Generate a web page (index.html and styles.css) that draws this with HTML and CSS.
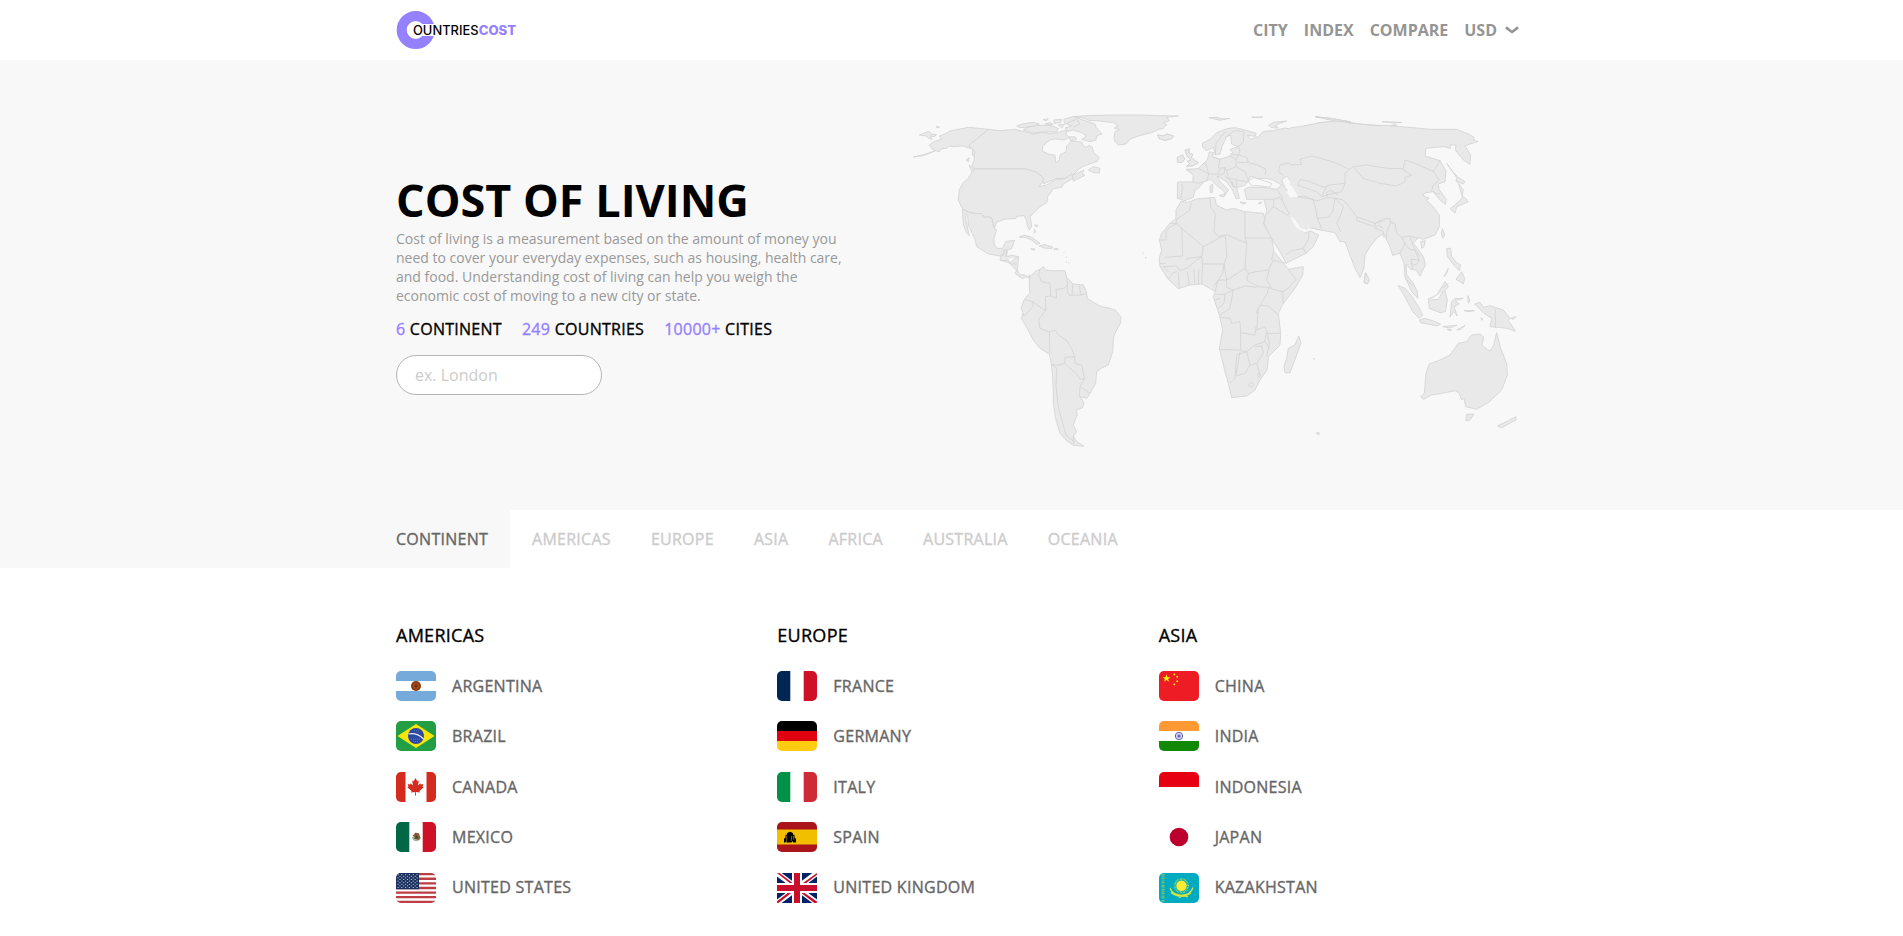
FILE: index.html
```html
<!DOCTYPE html>
<html lang="en">
<head>
<meta charset="utf-8">
<title>Countries Cost</title>
<link rel="stylesheet" href="styles.css">
</head>
<body>
<header class="header">
  <div class="container header-inner">
    <a class="logo" aria-label="Countries Cost">
      <svg width="122" height="40" viewBox="0 0 122 40">
        <circle cx="19.700" cy="20" r="14" fill="none" stroke="#9580ff" stroke-width="10"/>
        <path d="M25 14h17v12H25z" fill="#fff"/>
        <text class="logo-a" x="17" y="24.700" textLength="65.500" lengthAdjust="spacingAndGlyphs">OUNTRIES</text>
        <text class="logo-b" x="82.700" y="24.700" textLength="37.500" lengthAdjust="spacingAndGlyphs">COST</text>
      </svg>
    </a>
    <nav class="nav">
      <a>CITY</a><a>INDEX</a><a>COMPARE</a>
      <a class="currency">USD <svg width="14" height="8" viewBox="0 0 14 8"><path d="M1 1.200Q3.800 3.800 7 6Q10.200 3.800 13 1.200" fill="none" stroke="#959595" stroke-width="2.600"/></svg></a>
    </nav>
  </div>
</header>
<section class="hero">
  <div class="container hero-inner">
    <div class="intro">
      <h1>COST OF LIVING</h1>
      <p class="lead">Cost of living is a measurement based on the amount of money you<br>need to cover your everyday expenses, such as housing, health care,<br>and food. Understanding cost of living can help you weigh the<br>economic cost of moving to a new city or state.</p>
      <div class="stats"><span><b>6</b> CONTINENT</span><span><b>249</b> COUNTRIES</span><span><b>10000+</b> CITIES</span></div>
      <input class="search" type="text" placeholder="ex. London">
    </div>
    <svg class="map" width="604" height="340" viewBox="913 112 604 340">
      <!-- North America -->
      <g transform="translate(900 100) scale(.33333)">
        <path d="M58 105L75 98 88 94 95 102 110 104 102 110 92 108 96 118 85 114 78 108ZM88 135L105 123 125 118 118 108 135 102 150 93 205 82 265 88 208 138 228 150 224 172 217 165 218 148 190 138 160 140 148 138 140 145 125 146 118 155 100 150ZM40 171L70 164 105 153 70 167ZM108 81L118 80 118 83ZM198 180L208 173 205 186ZM207 195L225 210 218 219Z"/>
        <path d="M265 88L300 92 345 88 375 96 400 102 430 96 450 102 472 98 500 90 498 105 510 112 492 120 465 117 450 120 428 138 428 153 445 162 465 166 467 188 478 180 480 165 498 155 500 138 515 123 545 126 550 138 558 142 568 136 576 141 582 158 597 172 594 182 575 190 552 198 535 208 520 225 552 210 546 222 555 226 520 243 515 224 495 236 470 235 430 252 428 232 410 217 375 207 225 207 215 198 222 182 224 155 207 136Z"/>
        <path d="M225 207H375L390 210 410 217 428 232 430 240 418 260 440 255 470 238 495 236 515 222 520 235 490 252 485 262 460 266 443 290 441 308 420 320 402 338 390 350 395 378 388 390 382 378 380 362 372 347 350 349 347 356 318 357 290 366 283 385 275 353 260 350 253 352 245 341 225 340 205 336 187 326 175 300 178 270 190 248 205 235 215 218Z"/>
        <path d="M187 328L205 336 225 341 245 341 253 352 262 350 275 355 283 385 290 390 282 415 283 432 290 445 308 445 318 424 344 421 335 445 320 452 312 450 312 462 300 468 265 462 230 440 225 418 205 375 203 345 198 340 197 358 203 385 208 407 200 400 190 372Z"/>
        <path d="M312 450H322L320 470 335 466 356 470 352 510 360 525 372 524 382 530 388 525 390 535 378 530 368 536 345 520 350 512 340 500 325 487 300 480 303 468 312 464ZM320 452L317 470M303 482L325 480 330 490 345 475 356 470M332 492H350"/>
        <path d="M357 412L372 405 395 412 420 430 410 433 395 420 375 412ZM418 438L432 433 458 441 455 446 430 444ZM392 446L405 447 402 451ZM462 446H474V449H462ZM403 375L414 376 410 382ZM403 388L407 396 403 400ZM565 210L580 200 600 205 598 219 582 218ZM492 456V459M500 470V474M499 485V488M506 487V490M728 459H730M735 474H738"/>
        <path d="M520 50L560 47 640 45 720 45 775 47 835 48 800 52 808 62 790 68 800 74 790 85 775 88 755 98 715 108 690 118 678 132 655 135 645 125 642 112 645 95 658 88 642 84 655 78 640 68 590 62 570 62 550 54ZM773 105L790 108 800 102 820 108 815 116 795 121 778 116Z"/>
        <path d="M350 78L370 71 400 67 418 72 395 80 360 83ZM370 90L385 80 420 76 450 76 475 85 470 96 430 96 400 99ZM430 59L445 56 440 62ZM435 72L450 68 460 74ZM462 60L485 58 482 68 462 70ZM475 75L495 72 485 84ZM490 58L520 50 555 62 585 72 588 82 606 102 590 108 588 120 570 125 545 118 560 108 545 98 520 90 502 94 495 84 515 78 495 70ZM508 111L525 110 530 118 512 123ZM500 70L530 58 540 72 520 82"/>
        <path d="M855 150L868 148 866 158 878 163 874 172 885 182 896 188 880 197 860 199 870 190 862 184 873 180 861 168ZM833 172L848 165 854 178 845 188 832 186ZM858 208L878 207"/>
      </g>
      <!-- South America -->
      <g transform="translate(980 220) scale(.33333)">
        <path d="M148 180L152 168 165 155 180 148 190 140 196 150 215 152 255 152 260 172 272 184 278 192 310 195 318 212 322 235 345 250 365 260 388 264 408 272 423 292 421 310 405 340 400 355 398 395 385 435 365 444 350 456 347 490 330 520 320 535 300 530 312 548 308 563 288 570 292 584 285 600 280 615 290 635 280 648 290 665 312 679 280 676 258 660 240 640 228 600 220 550 220 520 218 470 214 430 208 402 180 385 160 360 140 322 124 295 130 280 123 265 132 240 150 218 148 200Z"/>
        <path fill="none" d="M180 148L176 165 185 185 210 190 212 228 196 230 198 270M212 228L230 234 228 208 250 206 262 196 260 172M262 196V215L268 226 300 225 318 222M278 194L276 226M298 196L302 226M132 238L158 245 160 258 135 286 124 282M158 245L190 268 198 270 176 298 180 325 208 336 225 330 236 346 260 362 275 385 284 410 255 412 254 430 232 436 216 433M208 336L210 400M284 410L285 430 305 436 314 475 300 478 292 464 254 430M314 475L300 500 330 520M300 500L298 530M216 433L230 445 228 500 235 560 248 610 258 645 285 668M280 645V672"/>
      </g>
      <!-- Europe and Africa -->
      <g transform="translate(1130 100) scale(.33333)">
        <path d="M217 130L240 118 260 98 290 86 315 83 345 90 378 100 376 109 352 106 362 118 385 110 400 94 430 92 465 84 495 90 520 80 570 68 620 63 665 68 700 73 750 76V388L735 360 690 420 660 460 645 425 630 400 615 388 575 390 540 383 525 392 500 365 483 350 495 372 525 400 540 392 566 405 550 440 528 460 468 490 450 455 418 405 402 370 410 330 402 298 350 298 343 268 355 262 400 262 440 268 455 255 428 240 408 235 380 236 362 228 352 248 340 258 320 262 328 295 318 296 308 270 290 246 262 228 270 245 296 270 286 282 280 272 262 258 242 238 222 245 205 265 195 270 190 292 165 302 142 295 143 246 188 246 190 225 170 210 205 205 232 180 238 155 250 158 248 170 270 178 300 168 308 158 300 148 325 140 305 132 302 105 290 110 276 140 270 162 256 165 250 142 230 152 218 142Z"/>
        <path d="M355 245L370 232 395 240 425 250 420 262 395 258 365 257ZM455 240L470 228 480 240 490 262 502 288 485 290 465 262Z" fill="#f8f8f8"/>
        <path d="M166 151L178 146 176 158 188 163 184 172 195 182 205 188 190 197 170 199 180 190 172 184 183 180 171 168ZM142 172L158 165 164 178 155 188 142 186ZM83 105L100 108 110 102 130 108 125 116 105 121 88 116ZM267 287L288 281 282 291ZM240 258L248 252 247 278 241 278ZM330 306L348 309 338 312ZM384 310L395 306 392 312ZM237 53L262 52 275 57 300 55 270 61ZM365 51H398L380 53ZM416 76L430 67 470 63 450 70 436 78 445 84 425 83ZM555 50L600 54 660 65 610 60Z"/>
        <path fill="none" d="M155 252L158 262 152 295M188 246L205 250 222 245M205 205L225 215 236 222 232 240M225 188L232 206 236 222 265 222 270 208M250 172L270 178 265 205 285 203 290 212 318 200 318 178 300 168M318 178L325 165 302 162M325 165L350 172 355 187 320 187M355 187L385 196 408 208 405 225M318 200L345 215 355 240M285 203L282 222 265 225M290 212L295 235 320 240 320 262 308 258 308 245M320 240L350 245M285 228L300 240 310 260M290 110L305 95 320 92 342 95 340 125 325 140 330 152 325 165M256 165L258 130 275 108 290 92M445 215L450 195 470 190 510 192 515 175 540 172 560 168 590 180 625 185 655 205 690 195 750 198M445 215L460 226M655 205L660 225 640 250 605 255 575 250 540 245 510 235 498 240 520 260 560 275 575 290 600 282 640 285 625 270 640 250M498 240L495 260M502 290L550 292 560 300 590 292 615 295 640 315 635 350 620 370 632 395M555 302L560 352 575 385M560 352L600 350 610 320 615 295M640 315L665 325 680 350 735 370 748 360M440 268L455 290 460 310 483 350M402 298H432L450 292 455 300M432 298L430 320 410 345M430 320L480 350M468 465L485 452 520 445 535 418 538 390M520 445L528 460M660 205L690 235 750 255M600 255L595 275"/>
        <path d="M154 303L172 308 200 297 254 292 259 315 290 330 310 325 345 335 400 340 405 355 400 370 425 415 432 455 465 495 475 508 520 500 518 525 495 565 460 610 445 640 452 700 450 735 415 770 412 808 390 840 375 870 350 888 305 893 295 850 285 815 268 745 278 690 268 645 250 590 256 575 240 565 215 552 180 555 145 566 115 538 90 500 88 475 95 450 88 420 95 400 118 372 138 355 138 330Z"/>
        <path fill="none" d="M184 310L180 330 140 358 138 370 220 440 215 470 200 480 170 505 150 512 140 498 100 500M118 370H142M88 420H108V395L118 382 142 370M155 385L158 468 105 472M220 440L285 405 288 425 290 470 282 492H218L215 470M240 294L242 320 256 342 252 395 265 410 285 405M345 335V410L350 430 288 403M350 414H425M350 430L345 505 330 515 290 540 282 492M345 505L355 520 380 515 415 510 430 480 465 490M355 520L350 540 385 560 415 562 412 580 385 625 380 690 402 680 410 690M290 540L290 562 310 570 345 558 380 562M290 540L265 540 255 575M256 583H285L310 570 300 625 270 645M285 583L282 610 265 625M252 600L270 595M270 652L300 655 305 670 330 665 332 698 375 705 378 680M332 698V750L268 748M332 752L350 755 375 735 405 725 408 700 452 700M350 755L320 765 315 835 300 850M330 755L318 828 345 820 360 795 380 790 400 760 395 738 375 740M350 755L360 795M380 790L390 825M356 855L365 845 372 854 362 862ZM385 820L392 825 388 834 383 828ZM390 615L415 618 445 645M415 562L430 568 458 575 460 610M458 575L475 565 498 538 475 508M418 510L410 540 425 565M385 625L378 640M145 518L148 565M172 515L178 555M192 508L194 550M206 508V552M218 490L215 552M165 480L175 475 215 470M115 538L128 520 140 515M88 490H108M100 500L115 515M250 560L265 540 278 520 282 492M410 690L418 730 410 770M405 725L418 745M425 480L430 455"/>
        <path d="M506 708L513 728 500 765 480 818 465 818 462 800 470 775 475 745 495 735ZM705 520L718 540 712 552 702 548ZM236 600H239M40 459H42M46 472H50M470 706H472M551 777H555"/>
      </g>
      <!-- Asia and Oceania -->
      <g transform="translate(1290 100) scale(.33333)">
        <path d="M0 84L40 78 90 68 140 63 185 70 220 73 255 77 290 76 330 80 370 83 420 88 500 88 535 102 552 112 550 120 564 125 540 132 525 138 542 165 540 193 520 180 496 150 498 135 480 135 482 145 460 140 408 145 405 168 450 182 468 212 465 245 445 252 447 268 468 298 466 313 450 300 430 275 408 278 398 286 418 295 408 300 428 318 448 345 448 380 435 405 400 418 385 412 370 430 382 445 400 470 406 495 390 528 378 510 362 508 348 492 350 525 370 550 382 575 384 595 365 575 345 530 342 490 330 460 308 466 298 435 280 400 260 415 240 440 225 465 222 505 210 533 195 505 178 460 165 425 150 425 135 398 92 390 60 383 45 392 20 375 0 350"/>
        <path fill="none" d="M0 194H35L30 178 65 168 110 180 145 192 178 208 190 200 232 195 290 205 340 206 345 180 380 192 430 215 448 240 430 255 425 272M178 208L165 220 165 250 120 255 100 262 60 245 32 238 22 255 80 275 95 290 120 282 155 275 165 250M190 202L220 235 270 250 320 258 345 245 345 232 365 225 338 208M430 215L450 182M425 272L440 282 450 280M20 290L70 298 78 330 82 355 95 385M22 290L40 288 80 303 112 292 135 295 128 335 115 352 82 355M135 295L160 320 150 350 140 370 152 395M135 295L160 300 185 330 200 350 255 370 280 362M200 350L202 362 255 380 255 370M255 370L280 358 300 355 302 368 315 370 320 400 335 412 345 430 330 460M255 385L280 395 280 412M255 385L265 375 280 385M302 368L290 395 288 415M335 412L360 408 385 415M345 430L355 445 375 452 388 480 378 495 362 490M360 410L370 440 390 470M388 480L362 478 368 508M345 535L370 558M112 292L110 278 120 270 145 285M95 290L110 260"/>
        <path d="M-10 276L3 254 18 278 24 290 0 292Z" fill="#f8f8f8" stroke="none"/>
        <path d="M-3 344L15 360 30 382 50 390 58 380 60 392 42 396 18 382Z" fill="#f8f8f8" stroke="none"/>
        <path d="M470 190L480 205 502 230 525 245 520 252 498 244 500 232ZM505 250L520 270 516 288 530 298 534 306 512 315 500 320 495 340 480 326 492 318 518 292ZM457 386L464 405 458 415 454 400ZM392 425L406 422 402 440 395 445ZM228 518L238 540 232 552 223 545ZM470 445H482L485 470 500 488 512 495 508 512 500 505 488 490 472 470ZM498 538L515 515 524 535 520 552 510 545ZM475 505L470 520 462 530Z"/>
        <path d="M325 557L345 565 368 592 385 620 398 645 388 655 368 635 350 600ZM388 660L405 655 430 663 452 672 440 678 392 668ZM458 680L500 676 478 684ZM472 688L485 690 480 692ZM500 690L526 676 512 688ZM415 597L440 585 465 545 475 560 465 572 472 600 466 635 450 638 418 625ZM422 600L445 598 460 572M480 652L485 605 495 595 520 595 495 602 508 612 492 620 502 648 490 635ZM533 587L540 600 535 610ZM523 632L553 632 535 635ZM554 612L570 607 580 622 600 617 640 630 660 655 655 662 668 680 676 694 650 685 625 682 600 680 605 655 582 640ZM616 628V684M662 655L678 650 670 658ZM572 655L578 655 576 661ZM460 562L475 550"/>
        <path d="M392 890L403 880 408 820 418 792 450 780 480 765 505 730 530 725 545 705 570 702 582 712 575 735 600 754 610 738 620 698 632 745 650 790 652 825 635 870 595 908 560 928 527 920 522 895 515 900 508 880 495 872 455 880 425 885 400 898ZM530 943L552 942 540 960 527 962ZM622 978L655 962 678 950 678 960 635 983ZM78 999L88 998 86 1005ZM70 776H74M76 50L130 57 184 66 130 62ZM276 65L335 67 310 69ZM304 76L320 75ZM80 645H81"/>
      </g>
    </svg>
  </div>
</section>
<div class="tabbar">
  <div class="container tabs">
    <a class="tab active">CONTINENT</a><a class="tab">AMERICAS</a><a class="tab">EUROPE</a><a class="tab">ASIA</a><a class="tab">AFRICA</a><a class="tab">AUSTRALIA</a><a class="tab">OCEANIA</a>
  </div>
</div>
<main class="container regions">
  <section class="region">
    <h2>AMERICAS</h2>
    <a class="country"><svg class="flag" viewBox="0 0 40 30"><path fill="#fff" d="M0 0h40v30H0z"/><path fill="#75aadb" d="M0 0h40v10H0zM0 20h40v10H0z"/><circle cx="20" cy="15" r="5" fill="#8a3a10"/><circle cx="20" cy="15" r="2.800" fill="#b0581a"/><circle cx="20" cy="15" r="1.700" fill="#6e2a10"/></svg>ARGENTINA</a>
    <a class="country"><svg class="flag" viewBox="0 0 40 30"><path fill="#229e45" d="M0 0h40v30H0z"/><path fill="#f8e509" d="M20 3L38.500 15 20 27 1.500 15z"/><circle cx="20" cy="15" r="8" fill="#2b49a3"/><path d="M12.500 13Q21 11.500 27.500 18" fill="none" stroke="#e8eef5" stroke-width="1.200"/><path d="M15 18h10M17 20.500h5M18 10h5" stroke="#7d90c8" stroke-width=".6" stroke-dasharray="1 1"/></svg>BRAZIL</a>
    <a class="country"><svg class="flag" viewBox="0 0 40 30"><path fill="#fff" d="M0 0h40v30H0z"/><path fill="#d52b1e" d="M0 0h9.500v30H0zM30.500 0H40v30h-9.500zM19.500 6l1.800 3.200 1.500-.7-.8 5 2.300-2.300.5 1.300 2.600-.5-.9 2.600 1.200.7-4.200 3.600.4 1.500-4-.5.1 3.600h-1l.1-3.600-4 .5.400-1.500-4.200-3.600 1.200-.7-.9-2.600 2.600.5.500-1.300 2.300 2.300-.8-5 1.500.7z"/></svg>CANADA</a>
    <a class="country"><svg class="flag" viewBox="0 0 40 30"><path fill="#fff" d="M0 0h40v30H0z"/><path fill="#006847" d="M0 0h13.300v30H0z"/><path fill="#ce1126" d="M26.700 0H40v30H26.700z"/><path d="M16 15a4.300 4.300 0 1 0 8.600 0z" fill="#a5b49c"/><path d="M16.500 14l3-3.500 3.500 1 1.500 4.500-2 2-3-1-1-2z" fill="#8a5838"/><path d="M18 17l3-4 1 3z" fill="#3c4c2f"/></svg>MEXICO</a>
    <a class="country"><svg class="flag" viewBox="0 0 40 30"><path fill="#fff" d="M0 0h40v30H0z"/><path stroke="#bd3d44" stroke-width="2.310" d="M0 1.150h40M0 5.770h40M0 10.400h40M0 15h40M0 19.600h40M0 24.200h40M0 28.850h40"/><path fill="#192f5d" d="M0 0h23v16.150H0z"/><path stroke="#c8cfdd" stroke-width="1" stroke-dasharray="1.100 2.700" d="M1.500 1.700h21M1.500 4.900h21M1.500 8.100h21M1.500 11.300h21M1.500 14.500h21M3.400 3.300h18M3.400 6.500h18M3.400 9.700h18M3.400 12.900h18"/></svg>UNITED STATES</a>
  </section>
  <section class="region">
    <h2>EUROPE</h2>
    <a class="country"><svg class="flag" viewBox="0 0 40 30"><path fill="#fff" d="M0 0h40v30H0z"/><path fill="#002654" d="M0 0h13.300v30H0z"/><path fill="#ce1126" d="M26.700 0H40v30H26.700z"/></svg>FRANCE</a>
    <a class="country"><svg class="flag" viewBox="0 0 40 30"><path d="M0 0h40v10H0z"/><path fill="#e1000f" d="M0 10h40v10H0z"/><path fill="#fc1" d="M0 20h40v10H0z"/></svg>GERMANY</a>
    <a class="country"><svg class="flag" viewBox="0 0 40 30"><path fill="#fff" d="M0 0h40v30H0z"/><path fill="#009246" d="M0 0h13.300v30H0z"/><path fill="#ce2b37" d="M26.700 0H40v30H26.700z"/></svg>ITALY</a>
    <a class="country"><svg class="flag" viewBox="0 0 40 30"><path fill="#aa151b" d="M0 0h40v30H0z"/><path fill="#f1bf00" d="M0 7.500h40v15H0z"/><path d="M7 20.500v-4l1.300-.5.200-3 1.500-.5v-1.500l3-1.300 3 1.300v1.500l1.500.5.200 3 1.300.5v4h-2.700l-.8-1.500-1 1.500H9.700l-.7-1.500-.5 1.500z"/><path d="M9.700 19.500v-6M14.700 14l-.5 5M16.700 14v4" fill="none" stroke="#f1bf00" stroke-width=".5"/></svg>SPAIN</a>
    <a class="country"><svg class="flag square" viewBox="0 0 40 30"><path fill="#012169" d="M0 0h40v30H0z"/><path stroke="#fff" stroke-width="5.600" d="M0 0l40 30M40 0L0 30"/><path fill="#c8102e" d="M0 0h2.500L15 9.400V11h-1zM40 0v1.800L28 11h-3.500zM0 30v-1.800L12 19h3.500L1.500 30zM40 30h-2.700L25 20.500V19h1L40 28.500z"/><path fill="#fff" d="M15 0h10v30H15zM0 10h40v10H0z"/><path fill="#c8102e" d="M17 0h6v30h-6zM0 12h40v6H0z"/></svg>UNITED KINGDOM</a>
  </section>
  <section class="region">
    <h2>ASIA</h2>
    <a class="country"><svg class="flag" viewBox="0 0 40 30"><path fill="#ee1c25" d="M0 0h40v30H0z"/><path fill="#ff0" d="M7.500 3.300l.95 2.850h3l-2.400 1.800.9 2.850L7.500 9.050 5 10.800l.9-2.850-2.400-1.800h3z"/><path d="M14.300 3.400h2M17.200 5.800h2M17.200 10.300h2M14.300 13.400h2M15.300 2.400v2M18.200 4.800v2M18.200 9.300v2M15.300 12.400v2" stroke="#ff0" stroke-width=".8"/></svg>CHINA</a>
    <a class="country"><svg class="flag" viewBox="0 0 40 30"><path fill="#fff" d="M0 0h40v30H0z"/><path fill="#f93" d="M0 0h40v10H0z"/><path fill="#128807" d="M0 20h40v10H0z"/><circle cx="20" cy="15" r="3.600" fill="none" stroke="#4a4aa8" stroke-width="1"/><circle cx="20" cy="15" r="1.600" fill="#2525a0"/><path d="M16.500 15h7M20 11.500v7M17.500 12.500l5 5M22.500 12.500l-5 5" stroke="#8a8acb" stroke-width=".4"/></svg>INDIA</a>
    <a class="country"><svg class="flag" viewBox="0 0 40 30"><path fill="#fff" d="M0 0h40v30H0z"/><path fill="#e70011" d="M0 0h40v15H0z"/></svg>INDONESIA</a>
    <a class="country"><svg class="flag" viewBox="0 0 40 30"><path fill="#fff" d="M0 0h40v30H0z"/><circle cx="20" cy="15" r="9.300" fill="#bc002d"/></svg>JAPAN</a>
    <a class="country"><svg class="flag" viewBox="0 0 40 30"><path fill="#00abc2" d="M0 0h40v30H0z"/><path d="M4 1v28" stroke="#8fc860" stroke-width="3.200" stroke-dasharray="1.600 .7 .6 .8" opacity=".8"/><circle cx="22.500" cy="12.700" r="6.600" fill="none" stroke="#bfe04a" stroke-width="1.800" stroke-dasharray=".6 .8"/><circle cx="22.500" cy="12.700" r="5.200" fill="#ffec2d"/><path d="M11 15Q13 21 20 22 31 23.500 34 14.500M12 19.500Q22 27 32 20M20 24.500Q25 22 29 24" fill="none" stroke="#d5e33a" stroke-width="1.300"/></svg>KAZAKHSTAN</a>
  </section>
</main>
</body>
</html>
```
FILE: styles.css
```css
* { box-sizing: border-box; }
body { margin: 0; background: #fff; color: #000; font: 16px/1.5 "Open Sans", "Noto Sans", sans-serif; overflow: hidden; }
.container { width: 1144px; margin: 0 auto 0 396px; }
.header { height: 60px; }
.header-inner { display: flex; justify-content: space-between; align-items: center; height: 60px; padding-right: 21px; }
.logo { display: flex; }
.logo-a, .logo-b { font-family: Inter, sans-serif; font-size: 12.5px; }
.logo-a { font-weight: 500; }
.logo-b { font-weight: 800; fill: #9580ff; }
.nav { display: flex; gap: 16px; color: #959595; font-weight: 700; }
.currency { display: flex; align-items: center; gap: 8px; }
.hero { height: 450px; background: #f8f8f8; }
.hero-inner { display: flex; justify-content: space-between; padding-right: 23px; }
.intro { padding-top: 110px; }
h1 { margin: 0; font-size: 45px; line-height: 59px; font-weight: 700; white-space: nowrap; }
.lead { margin: 0; color: #999; font-size: 14px; line-height: 19px; white-space: nowrap; }
/* Medium weight: the regular face, slightly thickened and spaced */
.stats, .tabs, h2, .country { font-weight: 400; letter-spacing: .27px; -webkit-text-stroke: .35px currentColor; }
.stats { display: flex; gap: 20px; margin-top: 12px; line-height: 24px; }
.stats b { font-weight: 400; color: #9580ff; }
.search { display: block; width: 206px; height: 40px; margin-top: 14px; padding: 0 18px; border: 1px solid #b5b5b5; border-radius: 20px; background: #fff; font: 16px "Open Sans", sans-serif; }
.search::placeholder { color: #ccc; }
.map { margin-top: 52px; fill: #e9e9e9; stroke: #d4d4d4; stroke-width: 2.6; stroke-linejoin: round; }
.tabbar { height: 58px; background: linear-gradient(to right, #f8f8f8 510px, #fff 510px); }
.tabs { display: flex; color: #ccc; line-height: 58px; }
.tab { margin-right: 40px; }
.tab.active { width: 114px; margin-right: 22px; color: #666; }
.regions { display: grid; grid-template-columns: repeat(3, 381.33px); padding-top: 54px; }
h2 { margin: 0 0 22px; font-size: 18px; line-height: 27px; }
.country { display: flex; align-items: center; gap: 16px; height: 30px; margin-bottom: 20.4px; padding-bottom: .4px; color: #666; }
.flag { align-self: flex-start; flex: none; width: 40px; height: 30px; border-radius: 5px; }
.flag.square { border-radius: 1px; }
```
